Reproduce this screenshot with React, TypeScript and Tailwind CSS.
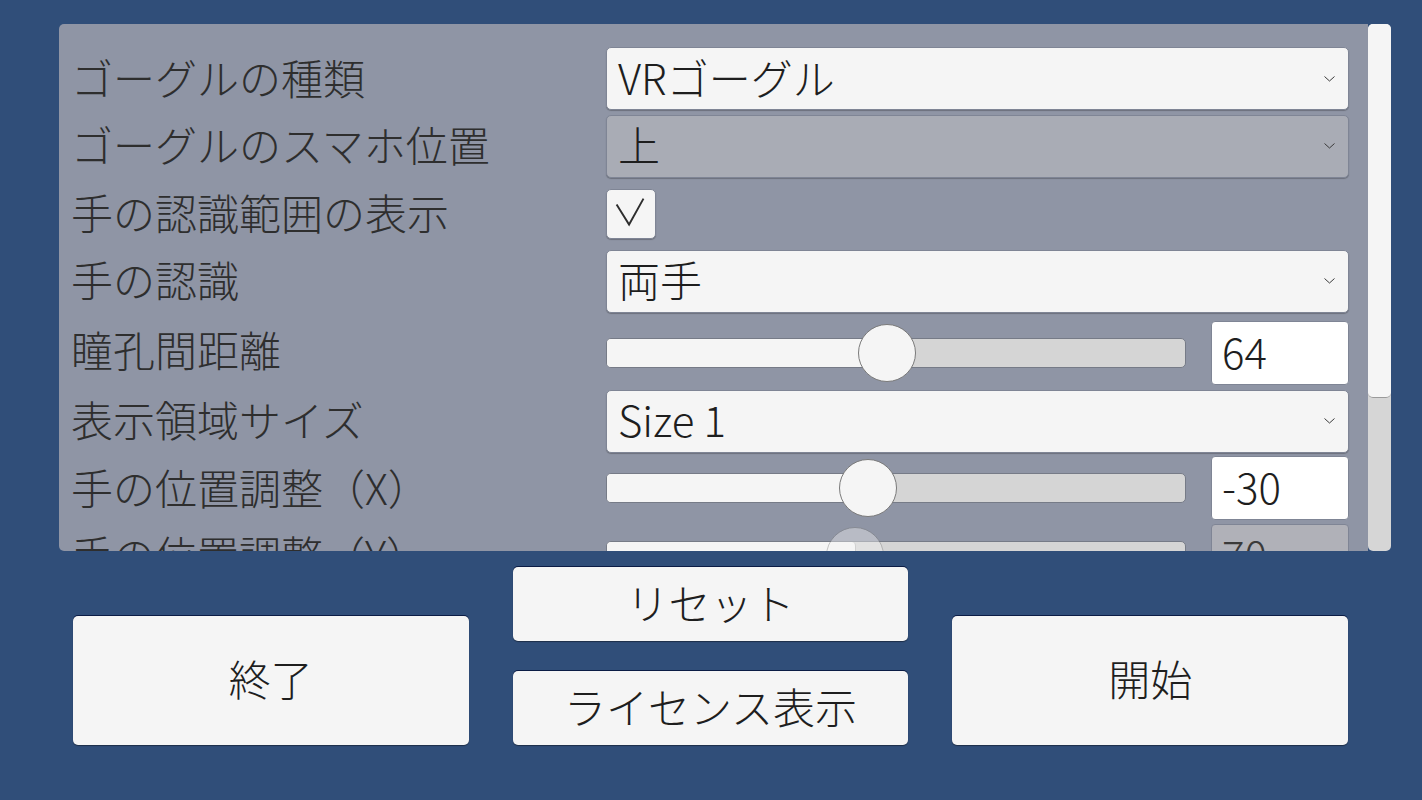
import React from 'react';

type Row =
  | { kind: 'select'; label: string; value: string; disabled?: boolean }
  | { kind: 'check'; label: string; checked: boolean }
  | { kind: 'slider'; label: string; value: number; pos: number; disabled?: boolean; tall?: boolean };

const rows: Row[] = [
  { kind: 'select', label: 'ゴーグルの種類', value: 'VRゴーグル' },
  { kind: 'select', label: 'ゴーグルのスマホ位置', value: '上', disabled: true },
  { kind: 'check', label: '手の認識範囲の表示', checked: true },
  { kind: 'select', label: '手の認識', value: '両手' },
  { kind: 'slider', label: '瞳孔間距離', value: 64, pos: 252, tall: true },
  { kind: 'select', label: '表示領域サイズ', value: 'Size 1' },
  { kind: 'slider', label: '手の位置調整（X）', value: -30, pos: 233 },
  { kind: 'slider', label: '手の位置調整（Y）', value: 70, pos: 220, disabled: true },
];

const Chevron = () => (
  <svg width="11" height="6" viewBox="0 0 11 6" className="shrink-0">
    <polyline points="0.5,0.5 5.5,5 10.5,0.5" fill="none" stroke="#3a3a3a" strokeWidth="1" />
  </svg>
);

const Select = ({ value, disabled }: { value: string; disabled?: boolean }) => (
  <div
    className={`flex-1 h-full flex items-center justify-between pl-[11px] pr-[13px] rounded-[5px] border border-[#7f8595] shadow-[0_1px_1px_rgba(0,0,0,0.25)] ${
      disabled ? 'bg-[#a9acb5]' : 'bg-[#f5f5f5]'
    }`}
  >
    <span className="text-[42px] leading-none font-light text-[#1e1e1e] pb-[4px]">{value}</span>
    <Chevron />
  </div>
);

const Check = ({ checked }: { checked: boolean }) => (
  <div className="w-[50px] h-[50px] rounded-[5px] bg-[#f5f5f5] border border-[#7f8595] shadow-[0_1px_1px_rgba(0,0,0,0.25)] flex items-center justify-center">
    {checked && (
      <svg width="50" height="50" viewBox="0 0 50 50">
        <polyline points="10,15 23,36 38,9" fill="none" stroke="#2e2e2e" strokeWidth="2" />
      </svg>
    )}
  </div>
);

const Slider = ({ value, pos, disabled }: { value: number; pos: number; disabled?: boolean }) => (
  <div className="flex-1 h-[64px] self-end flex items-center gap-[25px]">
    <div className="relative flex-1 h-[30px] rounded-[5px] bg-[#d5d5d5] border border-[#767b87]">
      <div
        className="absolute left-0 top-0 bottom-0 rounded-[4px] bg-[#f5f5f5] border-r border-[#b8b8b8]"
        style={{ width: pos + 29 }}
      />
      <div
        className={`absolute top-1/2 -translate-y-1/2 w-[58px] h-[58px] rounded-full bg-[#f5f5f5] border-[1.5px] border-[#7a7a7a] ${
          disabled ? 'opacity-40' : ''
        }`}
        style={{ left: pos - 1 }}
      />
    </div>
    <div
      className={`w-[138px] h-full rounded-[4px] flex items-center pl-[10px] border border-[#7f8595] ${
        disabled ? 'bg-[#b0b1b8] text-[#3a3a3a]' : 'bg-white text-[#1e1e1e]'
      }`}
    >
      <span className="text-[42px] leading-none font-light pb-[4px]">{value}</span>
    </div>
  </div>
);

const Button = ({ label, className }: { label: string; className: string }) => (
  <div
    className={`w-full flex items-center justify-center rounded-[5px] bg-[#f5f5f5] shadow-[0_-1px_0_#0b1c45,0_1px_1px_rgba(0,0,0,0.4)] ${className}`}
  >
    <span className="text-[42px] leading-none font-light text-[#1e1e1e] pb-[5px]">{label}</span>
  </div>
);

export default function App() {
  return (
    <div className="w-full h-[800px] bg-[#304e79] flex flex-col font-['Noto_Sans_CJK_JP','Noto_Sans',sans-serif] overflow-hidden">
      {/* settings scroll view */}
      <div className="mt-[24px] ml-[59px] mr-[31px] h-[527px] flex">
        <div className="flex-1 bg-[#8f95a5] rounded-l-[5px] overflow-hidden pt-[23px] pl-[12px] pr-[19px] flex flex-col gap-[4.5px]">
          {rows.map((r, i) => (
            <div
              key={i}
              className={`shrink-0 flex items-center ${r.kind === 'slider' && r.tall ? 'h-[68px]' : 'h-[63px]'}`}
            >
              <div className="w-[535px] shrink-0 text-[42px] leading-none font-light text-[#2e2e2e] whitespace-nowrap pb-[4px]">
                {r.label}
              </div>
              <div className="flex-1 h-full flex items-center">
                {r.kind === 'select' && <Select value={r.value} disabled={r.disabled} />}
                {r.kind === 'check' && <Check checked={r.checked} />}
                {r.kind === 'slider' && <Slider value={r.value} pos={r.pos} disabled={r.disabled} />}
              </div>
            </div>
          ))}
        </div>
        <div className="w-[23px] bg-[#d6d6d6] rounded-[5px] flex flex-col">
          <div className="h-[374px] bg-[#f5f5f5] rounded-[5px] border-b border-[#9a9a9a]" />
        </div>
      </div>

      {/* buttons */}
      <div className="mt-[16px] pl-[73px] pr-[74px] grid grid-cols-3 gap-x-[44px] items-end">
        <Button label="終了" className="h-[129px]" />
        <div className="flex flex-col gap-[30px]">
          <Button label="リセット" className="h-[74px]" />
          <Button label="ライセンス表示" className="h-[74px]" />
        </div>
        <Button label="開始" className="h-[129px]" />
      </div>
    </div>
  );
}
